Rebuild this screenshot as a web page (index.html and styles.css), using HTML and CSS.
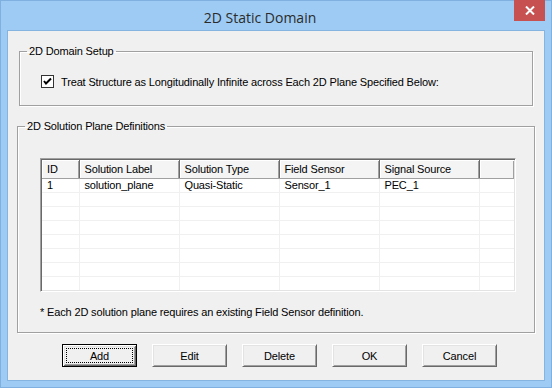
FILE: index.html
```html
<!DOCTYPE html>
<html lang="en">
<head>
    <meta charset="UTF-8">
    <title>2D Static Domain</title>
    <link rel="stylesheet" href="styles.css">
</head>
<body>
    <div class="window">
        <div class="titlebar">
            <span class="title">2D Static Domain</span>
            <button class="close-btn" type="button" aria-label="Close">
                <svg width="10" height="9" viewBox="0 0 10 9">
                    <path d="M1 0.5 L9 8.5 M9 0.5 L1 8.5" stroke="#fff" stroke-width="2"/>
                </svg>
            </button>
        </div>

        <div class="client">
            <fieldset class="group group-setup">
                <legend>2D Domain Setup</legend>
                <label class="check-row">
                    <svg class="checkbox" width="13" height="13" viewBox="0 0 13 13">
                        <rect x="0.5" y="0.5" width="12" height="12" fill="#fff" stroke="#333"/>
                        <path d="M3 6 L5 8.5 L10 3.5" fill="none" stroke="#000" stroke-width="2"/>
                    </svg>
                    <span>Treat Structure as Longitudinally Infinite across Each 2D Plane Specified Below:</span>
                </label>
            </fieldset>

            <fieldset class="group group-planes">
                <legend>2D Solution Plane Definitions</legend>
                <div class="group-body">
                    <div class="listview">
                        <table>
                            <colgroup>
                                <col class="c-id">
                                <col class="c-wide">
                                <col class="c-wide">
                                <col class="c-wide">
                                <col class="c-wide">
                                <col>
                            </colgroup>
                            <thead>
                                <tr>
                                    <th>ID</th>
                                    <th>Solution Label</th>
                                    <th>Solution Type</th>
                                    <th>Field Sensor</th>
                                    <th>Signal Source</th>
                                    <th></th>
                                </tr>
                            </thead>
                            <tbody>
                                <tr><td>1</td><td>solution_plane</td><td>Quasi-Static</td><td>Sensor_1</td><td>PEC_1</td><td></td></tr>
                                <tr><td></td><td></td><td></td><td></td><td></td><td></td></tr>
                                <tr><td></td><td></td><td></td><td></td><td></td><td></td></tr>
                                <tr><td></td><td></td><td></td><td></td><td></td><td></td></tr>
                                <tr><td></td><td></td><td></td><td></td><td></td><td></td></tr>
                                <tr><td></td><td></td><td></td><td></td><td></td><td></td></tr>
                                <tr><td></td><td></td><td></td><td></td><td></td><td></td></tr>
                                <tr><td></td><td></td><td></td><td></td><td></td><td></td></tr>
                            </tbody>
                        </table>
                    </div>
                    <p class="note">* Each 2D solution plane requires an existing Field Sensor definition.</p>
                </div>
            </fieldset>

            <div class="buttons">
                <button type="button" class="btn btn-default"><span>Add</span></button>
                <button type="button" class="btn"><span>Edit</span></button>
                <button type="button" class="btn"><span>Delete</span></button>
                <button type="button" class="btn"><span>OK</span></button>
                <button type="button" class="btn"><span>Cancel</span></button>
            </div>
        </div>
    </div>
</body>
</html>
```

FILE: styles.css
```css
* {
    margin: 0;
    padding: 0;
    box-sizing: border-box;
}

body {
    width: 552px;
    height: 388px;
    font-family: 'Liberation Sans', Arial, sans-serif;
    font-size: 11px;
    letter-spacing: -0.15px;
    color: #000;
    overflow: hidden;
}

.window {
    width: 552px;
    height: 388px;
    background: #9dcbf3;
    border: 1px solid #7fb0e0;
    display: flex;
    flex-direction: column;
}

.titlebar {
    height: 29px;
    display: flex;
    align-items: center;
    justify-content: center;
    position: relative;
}

.title {
    font-family: 'Open Sans', 'Noto Sans', sans-serif;
    font-size: 14px;
    letter-spacing: 0;
    color: #2b2b2b;
    margin: 3px 32px 0 0;
}

.close-btn {
    position: absolute;
    top: -1px;
    right: 6px;
    width: 31px;
    height: 21px;
    border: none;
    background: #c75050;
    display: flex;
    align-items: center;
    justify-content: center;
}

.client {
    margin: 0 6px 6px 6px;
    flex: 1;
    background: #f0f0f0;
    border: 1px solid #86b4e0;
    display: flex;
    flex-direction: column;
}

.group {
    border: 1px solid #a0a0a0;
    box-shadow: inset 1px 1px #fff, 1px 1px #fff;
}

.group legend {
    margin-left: 7px;
    padding: 0 2px;
    line-height: 13px;
}

.group-setup {
    margin: 14px 11px 0 11px;
    height: 61px;
}

.check-row {
    display: flex;
    align-items: center;
    gap: 7px;
    padding: 17px 0 0 21px;
}

.checkbox {
    flex: none;
}

.group-planes {
    margin: 14px 9px 0 9px;
    height: 213px;
}

.group-body {
    padding: 25px 18px 0 22px;
}

.listview {
    background: #fff;
    border: 1px solid;
    border-color: #a0a0a0 #fff #fff #a0a0a0;
    box-shadow: inset 1px 1px #696969, inset -1px -1px #e3e3e3;
    padding: 1px;
}

.listview table {
    width: 100%;
    border-collapse: collapse;
    table-layout: fixed;
}

.c-id {
    width: 37px;
}

.c-wide {
    width: 100px;
}

.listview th {
    height: 18px;
    font-weight: normal;
    text-align: left;
    padding: 0 0 0 5px;
    background: #f4f4f4;
    border-right: 1px solid #696969;
    border-bottom: 1px solid #a0a0a0;
    box-shadow: inset 1px 1px #fff, inset -1px 0 #a0a0a0;
    white-space: nowrap;
}

.listview th:last-child {
    border-right: none;
}

.listview td {
    height: 14px;
    padding: 0 0 0 5px;
    border-right: 1px solid #f0f0f0;
    border-bottom: 1px solid #f0f0f0;
    white-space: nowrap;
    line-height: 13px;
}

.listview td:last-child {
    border-right: none;
}

.listview tr:last-child td {
    border-bottom: none;
}

.note {
    margin-top: 14px;
}

.buttons {
    display: flex;
    gap: 15px;
    padding-left: 54px;
    margin-top: 11px;
}

.btn {
    width: 75px;
    height: 23px;
    font-family: inherit;
    font-size: 11px;
    letter-spacing: -0.15px;
    color: #000;
    background: #f0f0f0;
    border: 1px solid;
    border-color: #fff #696969 #696969 #fff;
    box-shadow: inset 1px 1px #e3e3e3, inset -1px -1px #a0a0a0;
    display: flex;
    align-items: center;
    justify-content: center;
}

.btn-default {
    border: 1px solid #000;
    box-shadow: inset 1px 1px #fff, inset -1px -1px #696969, inset 2px 2px #e3e3e3, inset -2px -2px #a0a0a0;
}

.btn-default span {
    width: 67px;
    height: 15px;
    border: 1px dotted #000;
    display: flex;
    align-items: center;
    justify-content: center;
}
```
